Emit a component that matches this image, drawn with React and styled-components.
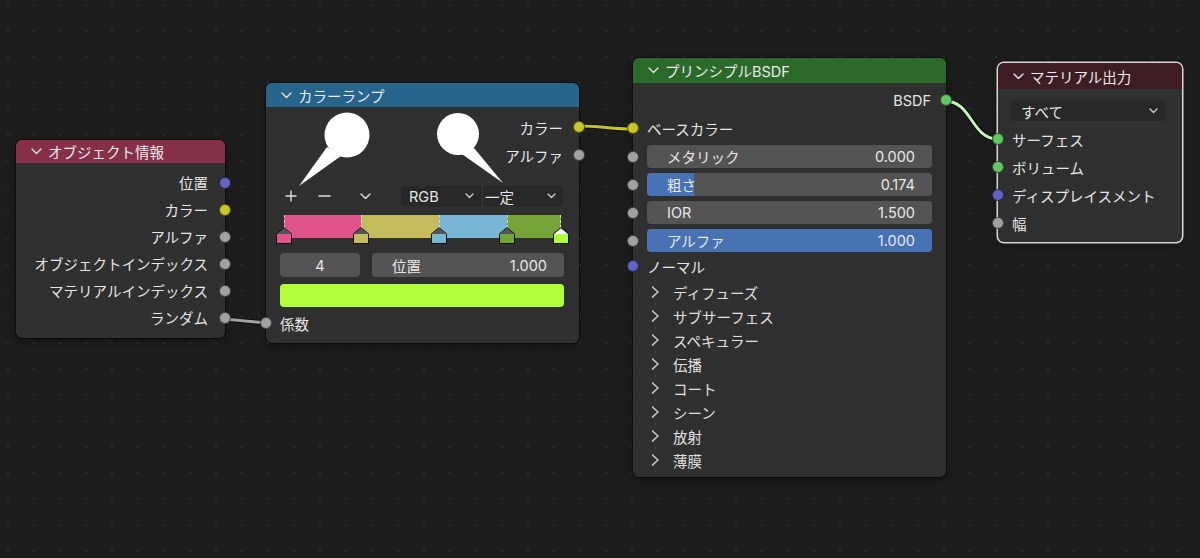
import React from "react";
import styled, { createGlobalStyle } from "styled-components";

const GlobalStyle = createGlobalStyle`
  html, body { margin: 0; padding: 0; background: #1d1d1d; }
  body { font-family: "Inter", "Noto Sans CJK JP", sans-serif; }
`;

const Canvas = styled.div`
    position: relative;
    width: 1200px;
    height: 558px;
    overflow: hidden;
    background-color: #1d1d1d;
    background-image: radial-gradient(circle, #2c2c2c 1px, transparent 1.6px);
    background-size: 26px 26px;
    background-position: -5px -8px;
`;

const Overlay = styled.svg`
    position: absolute;
    left: 0;
    top: 0;
    pointer-events: none;
    z-index: ${(p) => p.$z};
`;

const Node = styled.div`
    position: absolute;
    z-index: 1;
    left: ${(p) => p.$x}px;
    top: ${(p) => p.$y}px;
    width: ${(p) => p.$w}px;
    background: #303030;
    border-radius: 6px;
    color: #e6e6e6;
    font-size: 14.5px;
    box-shadow: 0 0 0 ${(p) => (p.$active ? "1.5px #d8d8d8" : "1px rgba(0,0,0,0.45)")},
        0 3px 8px rgba(0, 0, 0, 0.35);
`;

const Header = styled.div`
    display: flex;
    align-items: center;
    gap: 6px;
    height: ${(p) => p.$h}px;
    padding-left: 15px;
    background: ${(p) => p.$color};
    border-radius: 6px 6px 0 0;
    color: #ebebeb;
    font-size: 14.5px;
    white-space: nowrap;
`;

const Body = styled.div`
    display: flex;
    flex-direction: column;
    padding-top: ${(p) => p.$pt}px;
    padding-bottom: ${(p) => p.$pb}px;
`;

const SocketRow = styled.div`
    position: relative;
    height: ${(p) => p.$h}px;
    display: flex;
    align-items: center;
    justify-content: ${(p) => (p.$out ? "flex-end" : "flex-start")};
    padding: 0 ${(p) => p.$pad}px;
    white-space: nowrap;
`;

const Socket = styled.span`
    position: absolute;
    top: 50%;
    ${(p) => (p.$out ? "right: -6px;" : "left: -6px;")}
    width: 10px;
    height: 10px;
    margin-top: -6px;
    border-radius: 50%;
    background: ${(p) => p.$color};
    border: 1px solid rgba(0, 0, 0, 0.55);
`;

const Content = styled.div`
    display: flex;
    flex-direction: column;
    padding: 0 15px 0 14px;
`;

const Controls = styled.div`
    display: flex;
    align-items: center;
    height: 22px;
    margin-top: 16px;
`;

const IconBtn = styled.span`
    display: flex;
    align-items: center;
    justify-content: center;
    width: 22px;
    height: 22px;
    margin-left: ${(p) => p.$ml || 0}px;
    color: #dadada;
`;

const SelectGroup = styled.div`
    display: flex;
    margin-left: auto;
    height: 22px;
    background: #282828;
    border-radius: 4px;
    box-shadow: inset 0 0 0 1px #2f2f2f;
`;

const Select = styled.div`
    display: flex;
    align-items: center;
    justify-content: space-between;
    width: ${(p) => p.$w}px;
    padding: 0 8px 0 ${(p) => p.$pl}px;
    box-sizing: border-box;
    font-size: 14.5px;
    color: #e6e6e6;
    & + & {
        border-left: 1px solid #3a3a3a;
    }
`;

const RampWrap = styled.div`
    position: relative;
    height: 29px;
    margin: 8px 3px 0 4px;
`;

const RampBar = styled.div`
    display: flex;
    height: 23px;
`;

const RampSeg = styled.div`
    background: ${(p) => p.$color};
    border-left: 1px dashed rgba(255, 255, 255, 0.55);
    box-sizing: border-box;
    &:last-child {
        border-right: 1px dashed rgba(255, 255, 255, 0.7);
    }
`;

const Marker = styled.svg`
    position: absolute;
    top: 12px;
    margin-left: -8px;
`;

const FieldLine = styled.div`
    display: flex;
    gap: 12px;
    margin-top: 9px;
`;

const Field = styled.div`
    position: relative;
    display: flex;
    align-items: center;
    justify-content: ${(p) => (p.$center ? "center" : "space-between")};
    flex: ${(p) => (p.$w ? `0 0 ${p.$w}px` : "1")};
    height: ${(p) => p.$h || 23}px;
    padding: ${(p) => (p.$center ? "0" : "0 17px 0 20px")};
    background: #545454;
    border-radius: 4px;
    overflow: hidden;
    font-size: 14.5px;
    color: #e8e8e8;
    box-sizing: border-box;
    span {
        position: relative;
    }
`;

const Fill = styled.div`
    position: absolute;
    left: 0;
    top: 0;
    bottom: 0;
    background: #4772b3;
`;

const Swatch = styled.div`
    height: 23px;
    margin-top: 7px;
    background: ${(p) => p.$color};
    border-radius: 4px;
`;

const FieldList = styled.div`
    display: flex;
    flex-direction: column;
    gap: 5px;
    margin-top: 3px;
`;

const FieldRow = styled.div`
    position: relative;
    display: flex;
    padding: 0 14px;
`;

const PanelRow = styled.div`
    display: flex;
    align-items: center;
    gap: 13px;
    height: 24px;
    padding-left: 18px;
    color: #e0e0e0;
`;

const Dropdown = styled.div`
    display: flex;
    align-items: center;
    justify-content: space-between;
    height: 22px;
    margin: 11px 16px 3px 12px;
    padding: 0 8px 0 11px;
    background: #282828;
    border-radius: 4px;
    box-shadow: inset 0 0 0 1px #2f2f2f;
    font-size: 14.5px;
`;

const Chevron = ({ dir = "down", size = 11 }) =>
    dir === "down" ? (
        <svg width={size} height={size * 0.6} viewBox="0 0 11 6.6">
            <polyline points="1,1 5.5,5.6 10,1" fill="none" stroke="#dcdcdc" strokeWidth="1.4" strokeLinecap="round" strokeLinejoin="round" />
        </svg>
    ) : (
        <svg width="9" height="12" viewBox="0 0 9 12">
            <polyline points="1.5,1 7,6 1.5,11" fill="none" stroke="#d6d6d6" strokeWidth="1.4" strokeLinecap="round" strokeLinejoin="round" />
        </svg>
    );

const SmallDown = () => (
    <svg width="9" height="6" viewBox="0 0 9 6">
        <polyline points="1,1 4.5,4.5 8,1" fill="none" stroke="#cfcfcf" strokeWidth="1.3" strokeLinecap="round" strokeLinejoin="round" />
    </svg>
);

const SOCK = {
    vec: "#6363c7",
    col: "#c7c729",
    flt: "#a1a1a1",
    sh: "#63c763",
};

const objectOutputs = [
    ["位置", SOCK.vec],
    ["カラー", SOCK.col],
    ["アルファ", SOCK.flt],
    ["オブジェクトインデックス", SOCK.flt],
    ["マテリアルインデックス", SOCK.flt],
    ["ランダム", SOCK.flt],
];

const rampStops = [
    { pos: 0, color: "#e0548c" },
    { pos: 0.278, color: "#c4bb5c" },
    { pos: 0.56, color: "#78b5d2" },
    { pos: 0.805, color: "#76a338" },
    { pos: 1, color: "#b0ff3a", selected: true },
];

const bsdfFields = [
    { label: "メタリック", value: "0.000", fill: 0 },
    { label: "粗さ", value: "0.174", fill: 0.165 },
    { label: "IOR", value: "1.500", fill: 0 },
    { label: "アルファ", value: "1.000", fill: 1 },
];

const panels = ["ディフューズ", "サブサーフェス", "スペキュラー", "伝播", "コート", "シーン", "放射", "薄膜"];

const materialInputs = [
    ["サーフェス", SOCK.sh],
    ["ボリューム", SOCK.sh],
    ["ディスプレイスメント", SOCK.vec],
    ["幅", SOCK.flt],
];

const RAMP_W = 277;

function Wire({ d, color }) {
    return (
        <>
            <path d={d} fill="none" stroke="rgba(0,0,0,0.6)" strokeWidth="5" strokeLinecap="round" />
            <path d={d} fill="none" stroke={color} strokeWidth="3" strokeLinecap="round" />
        </>
    );
}

function ColorRamp() {
    return (
        <RampWrap>
            <RampBar>
                {rampStops.slice(0, -1).map((s, i) => (
                    <RampSeg
                        key={i}
                        $color={s.color}
                        style={{ flexBasis: `${(rampStops[i + 1].pos - s.pos) * 100}%` }}
                    />
                ))}
            </RampBar>
            {rampStops.map((s, i) => (
                <Marker key={i} width="16" height="17" viewBox="0 0 16 17" style={{ left: s.pos * RAMP_W }}>
                    <polygon points="1,7 8,1 15,7" fill={s.selected ? "#f2f2f2" : "#555555"} />
                    <rect x="1" y="7" width="14" height="9.5" fill={s.color} />
                    <polygon points="0.5,6.8 8,0.6 15.5,6.8 15.5,16.5 0.5,16.5" fill="none" stroke="#111" strokeWidth="1" />
                </Marker>
            ))}
        </RampWrap>
    );
}

export default function App() {
    return (
        <Canvas>
            <GlobalStyle />
            <Overlay $z={0} width="1200" height="558">
                <Wire d="M224 319 L266 323" color="#a3a3a3" />
                <Wire d="M579 126 C600 126 612 129 633 129" color="#cbc32e" />
                <Wire d="M945 101 C972 101 971 139 998 139" color="#c6f2be" />
            </Overlay>

            <Node $x={16} $y={140} $w={209}>
                <Header $h={23} $color="#86304a">
                    <Chevron />
                    オブジェクト情報
                </Header>
                <Body $pt={6} $pb={7}>
                    {objectOutputs.map(([label, c]) => (
                        <SocketRow key={label} $out $h={27} $pad={17}>
                            {label}
                            <Socket $out $color={c} />
                        </SocketRow>
                    ))}
                </Body>
            </Node>

            <Node $x={266} $y={83} $w={313}>
                <Header $h={24} $color="#27658c">
                    <Chevron />
                    カラーランプ
                </Header>
                <Body $pt={6} $pb={7}>
                    <SocketRow $out $h={28} $pad={16}>
                        カラー
                        <Socket $out $color={SOCK.col} />
                    </SocketRow>
                    <SocketRow $out $h={28} $pad={16}>
                        アルファ
                        <Socket $out $color={SOCK.flt} />
                    </SocketRow>
                    <Content>
                        <Controls>
                            <IconBtn>
                                <svg width="12" height="12" viewBox="0 0 12 12">
                                    <path d="M6 0.5 V11.5 M0.5 6 H11.5" stroke="#dcdcdc" strokeWidth="1.5" />
                                </svg>
                            </IconBtn>
                            <IconBtn $ml={11}>
                                <svg width="13" height="12" viewBox="0 0 13 12">
                                    <path d="M0.5 6 H12.5" stroke="#dcdcdc" strokeWidth="1.5" />
                                </svg>
                            </IconBtn>
                            <IconBtn $ml={19}>
                                <Chevron />
                            </IconBtn>
                            <SelectGroup>
                                <Select $w={82} $pl={9}>
                                    RGB
                                    <SmallDown />
                                </Select>
                                <Select $w={82} $pl={2}>
                                    一定
                                    <SmallDown />
                                </Select>
                            </SelectGroup>
                        </Controls>
                        <ColorRamp />
                        <FieldLine>
                            <Field $w={80} $h={24} $center>
                                <span>4</span>
                            </Field>
                            <Field $h={24}>
                                <span>位置</span>
                                <span>1.000</span>
                            </Field>
                        </FieldLine>
                        <Swatch $color="#b0ff3a" />
                    </Content>
                    <SocketRow $h={26} $pad={14} style={{ marginTop: 3 }}>
                        <Socket $color={SOCK.flt} />
                        係数
                    </SocketRow>
                </Body>
            </Node>

            <Node $x={633} $y={58} $w={313}>
                <Header $h={25} $color="#2c6a2b">
                    <Chevron />
                    プリンシプルBSDF
                </Header>
                <Body $pt={3} $pb={5}>
                    <SocketRow $out $h={28} $pad={15}>
                        BSDF
                        <Socket $out $color={SOCK.sh} />
                    </SocketRow>
                    <SocketRow $h={28} $pad={14}>
                        <Socket $color={SOCK.col} />
                        ベースカラー
                    </SocketRow>
                    <FieldList>
                        {bsdfFields.map((f) => (
                            <FieldRow key={f.label}>
                                <Socket $color={SOCK.flt} />
                                <Field>
                                    {f.fill > 0 && <Fill style={{ width: `${f.fill * 100}%` }} />}
                                    <span>{f.label}</span>
                                    <span>{f.value}</span>
                                </Field>
                            </FieldRow>
                        ))}
                    </FieldList>
                    <SocketRow $h={28} $pad={14}>
                        <Socket $color={SOCK.vec} />
                        ノーマル
                    </SocketRow>
                    {panels.map((p) => (
                        <PanelRow key={p}>
                            <Chevron dir="right" />
                            {p}
                        </PanelRow>
                    ))}
                </Body>
            </Node>

            <Node $x={998} $y={63} $w={184} $active>
                <Header $h={26} $color="#3e1d25">
                    <Chevron />
                    マテリアル出力
                </Header>
                <Body $pt={0} $pb={5}>
                    <Dropdown>
                        すべて
                        <SmallDown />
                    </Dropdown>
                    {materialInputs.map(([label, c]) => (
                        <SocketRow key={label} $h={28} $pad={14}>
                            <Socket $color={c} />
                            {label}
                        </SocketRow>
                    ))}
                </Body>
            </Node>

            <Overlay $z={2} width="1200" height="558">
                <circle cx="347" cy="135" r="22.5" fill="#fff" />
                <polygon points="327,147 341,156 299,186" fill="#fff" />
                <circle cx="458" cy="134" r="21" fill="#fff" />
                <polygon points="459,152 474,148 503,183" fill="#fff" />
            </Overlay>
        </Canvas>
    );
}
